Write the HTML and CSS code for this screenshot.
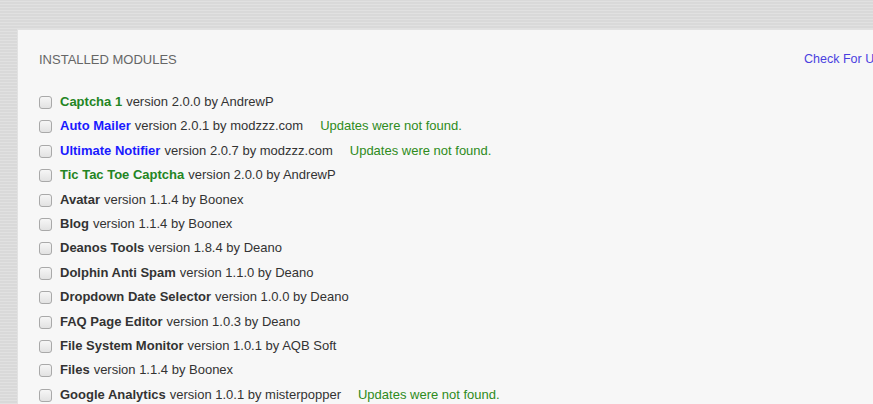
FILE: index.html
```html
<!DOCTYPE html>
<html>
<head>
<meta charset="utf-8">
<link rel="stylesheet" href="styles.css">
</head>
<body>
<div class="panel">
  <div class="header">
    <div class="title">INSTALLED MODULES</div>
    <a class="check">Check For Updates</a>
  </div>
  <ul class="modules">
    <li><span class="cb"></span><b class="green">Captcha 1</b> version 2.0.0 by AndrewP</li>
    <li><span class="cb"></span><b class="blue">Auto Mailer</b> version 2.0.1 by modzzz.com<span class="status">Updates were not found.</span></li>
    <li><span class="cb"></span><b class="blue">Ultimate Notifier</b> version 2.0.7 by modzzz.com<span class="status">Updates were not found.</span></li>
    <li><span class="cb"></span><b class="green">Tic Tac Toe Captcha</b> version 2.0.0 by AndrewP</li>
    <li><span class="cb"></span><b>Avatar</b> version 1.1.4 by Boonex</li>
    <li><span class="cb"></span><b>Blog</b> version 1.1.4 by Boonex</li>
    <li><span class="cb"></span><b>Deanos Tools</b> version 1.8.4 by Deano</li>
    <li><span class="cb"></span><b>Dolphin Anti Spam</b> version 1.1.0 by Deano</li>
    <li><span class="cb"></span><b>Dropdown Date Selector</b> version 1.0.0 by Deano</li>
    <li><span class="cb"></span><b>FAQ Page Editor</b> version 1.0.3 by Deano</li>
    <li><span class="cb"></span><b>File System Monitor</b> version 1.0.1 by AQB Soft</li>
    <li><span class="cb"></span><b>Files</b> version 1.1.4 by Boonex</li>
    <li><span class="cb"></span><b>Google Analytics</b> version 1.0.1 by misterpopper<span class="status">Updates were not found.</span></li>
  </ul>
</div>
</body>
</html>
```
FILE: styles.css
```css
html, body {
  margin: 0;
  padding: 0;
  overflow: hidden;
}
body {
  background-color: #dddddd;
  background-image: repeating-linear-gradient(0deg, rgba(255,255,255,0.12) 0 1px, rgba(0,0,0,0.02) 1px 3px);
  font-family: "Liberation Sans", Arial, sans-serif;
  font-size: 13px;
  color: #333;
  width: 873px;
  height: 404px;
  padding: 29px 0 0 17px;
  box-sizing: border-box;
}
.panel {
  background: #f7f7f7;
  border-left: 1px solid #e2e2e2;
  border-top: 1px solid #e2e2e2;
  width: 856px;
  height: 375px;
  padding: 21px 0 0 21px;
  box-sizing: border-box;
  overflow: hidden;
}
.header {
  display: flex;
  align-items: center;
  height: 16px;
  width: 900px;
}
.title {
  color: #666;
  font-size: 13px;
  width: 765px;
}
.check {
  color: #4a3fe0;
  font-size: 12.5px;
}
.modules {
  list-style: none;
  margin: 27px 0 0 0;
  padding: 0;
}
.modules li {
  height: 24.42px;
  display: flex;
  align-items: flex-start;
  white-space: nowrap;
  line-height: 16px;
}
.cb {
  width: 11px;
  height: 11px;
  border: 1px solid #a9a9a9;
  border-radius: 3px;
  background: linear-gradient(#f6f6f6, #e2e2e2);
  margin: 2px 8px 0 0;
  flex: none;
}
.modules b {
  color: #333;
  margin-right: 4px;
}
.modules b.green { color: #238523; }
.modules b.blue { color: #1a1aff; }
.status {
  color: #2e8b20;
  margin-left: 17px;
}
```
